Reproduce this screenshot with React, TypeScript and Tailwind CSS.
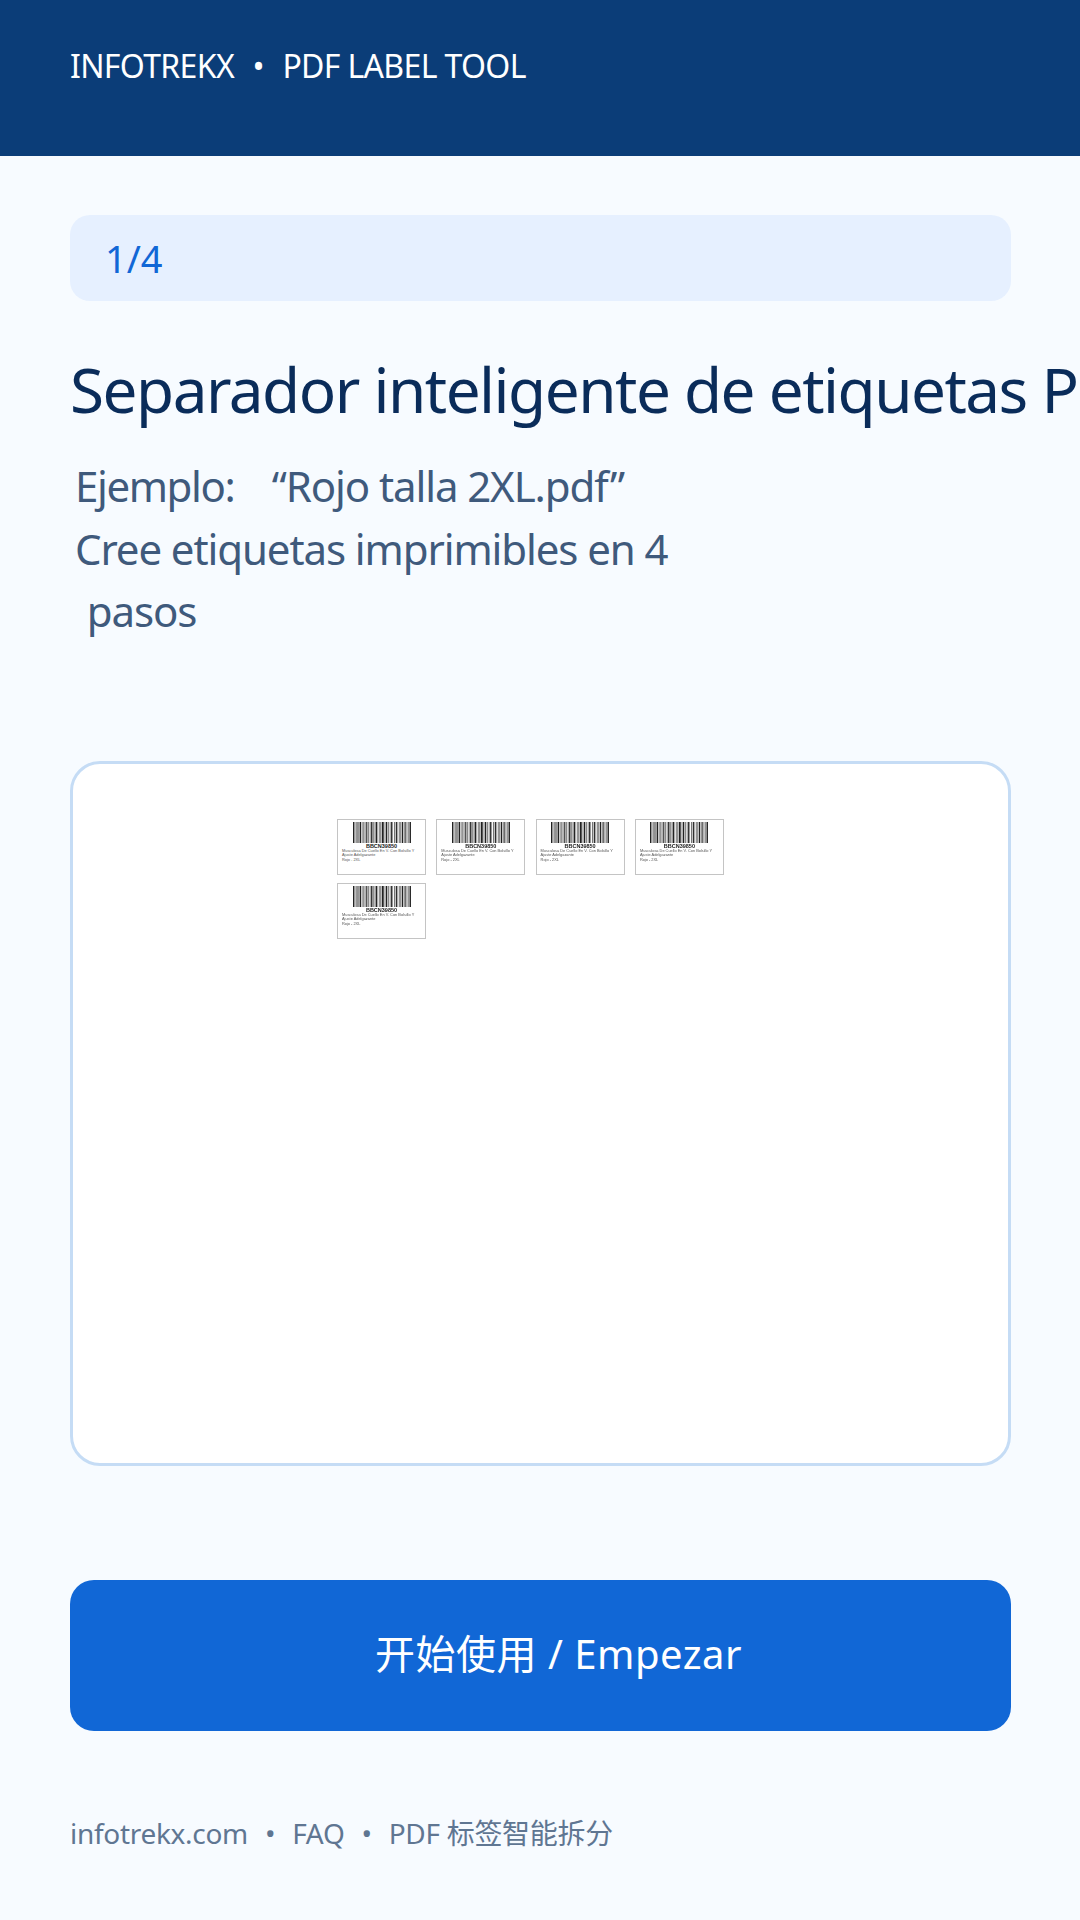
const BARS = [3, 1, 2, 1, 3, 2, 1, 1, 2, 3, 1, 2, 2, 1, 3, 1, 1, 2, 4, 1, 3, 2, 1, 2, 1, 3, 2, 1, 1, 2, 3, 1, 2, 1, 1, 3, 2, 1];

function Barcode() {
  let x = 0;
  return (
    <svg width="58" height="21" viewBox="0 0 120 42" preserveAspectRatio="none" className="block">
      {BARS.map((w, i) => {
        const bar = { x, w };
        x += w + (i % 3 === 0 ? 2 : 1.3);
        return <rect key={i} x={bar.x} y="0" width={bar.w} height="42" fill={i % 4 === 1 ? '#777' : '#222'} />;
      })}
    </svg>
  );
}

function Label() {
  return (
    <div className="w-[89px] h-[56px] border border-[#c4c4c4] bg-white flex flex-col px-[4px] pt-[2px] overflow-hidden">
      <div className="flex justify-center"><Barcode /></div>
      <div className="text-center text-[5.5px] leading-[6px] font-bold text-[#222] font-['Liberation_Sans',sans-serif]">BBCN39850</div>
      <div className="text-[3.9px] leading-[4.6px] text-[#555] font-['Liberation_Sans',sans-serif]">
        Musculosa De Cuello En V. Con Bolsillo Y<br />Ajuste Adelgazante<br />Rojo - 2XL
      </div>
    </div>
  );
}

export default function App() {
  return (
    <div className="w-[1080px] h-[1920px] overflow-hidden flex flex-col bg-[#f7fbff] font-['Noto_Sans','Noto_Sans_CJK_SC',sans-serif]">
      <header className="h-[156px] bg-[#0b3d78] flex items-start gap-[18.5px] pl-[70px] pt-[46px] text-white text-[32px] leading-[40px] whitespace-nowrap tracking-[-0.65px]">
        <span>INFOTREKX</span>
        <span>•</span>
        <span>PDF LABEL TOOL</span>
      </header>

      <main className="flex-1 flex flex-col pl-[70px] pr-[69px] pt-[59px]">
        <div className="h-[86px] rounded-[20px] bg-[#e6f0ff] flex items-center pl-[35px] text-[#1167d6] text-[38px]">1/4</div>

        <h1 className="mt-[50px] text-[62px] leading-[76px] font-normal text-[#0a2c5a] whitespace-nowrap tracking-[-1.5px]">
          Separador inteligente de etiquetas PDF
        </h1>

        <div className="mt-[28px] pl-[5px] text-[42px] leading-[62.5px] text-[#3f5a7c] tracking-[-1.1px] whitespace-pre">
          <div><span className="mr-[8px] tracking-[-1.4px]">Ejemplo:</span>   “Rojo talla 2XL.pdf”</div>
          <div>Cree etiquetas imprimibles en 4</div>
          <div className="pl-[2px]"> pasos</div>
        </div>

        <section className="mt-[118px] h-[705px] border-[3px] border-[#c5dcf5] rounded-[30px] bg-white pt-[55px] pl-[264px]">
          <div className="grid grid-cols-[repeat(4,89px)] gap-x-[10.3px] gap-y-[8px] blur-[0.35px]">
            <Label />
            <Label />
            <Label />
            <Label />
            <Label />
          </div>
        </section>

        <button className="mt-[114px] h-[151px] rounded-[24px] bg-[#1167d6] text-white text-[40px] tracking-[0.5px] pl-[36px] pb-[2px] flex items-center justify-center">
          开始使用 / Empezar
        </button>

        <footer className="mt-[82px] flex gap-[17px] text-[28px] leading-[40px] text-[#5f7692] whitespace-nowrap tracking-[-0.3px]">
          <span>infotrekx.com</span>
          <span>•</span>
          <span>FAQ</span>
          <span>•</span>
          <span>PDF 标签智能拆分</span>
        </footer>
      </main>
    </div>
  );
}
